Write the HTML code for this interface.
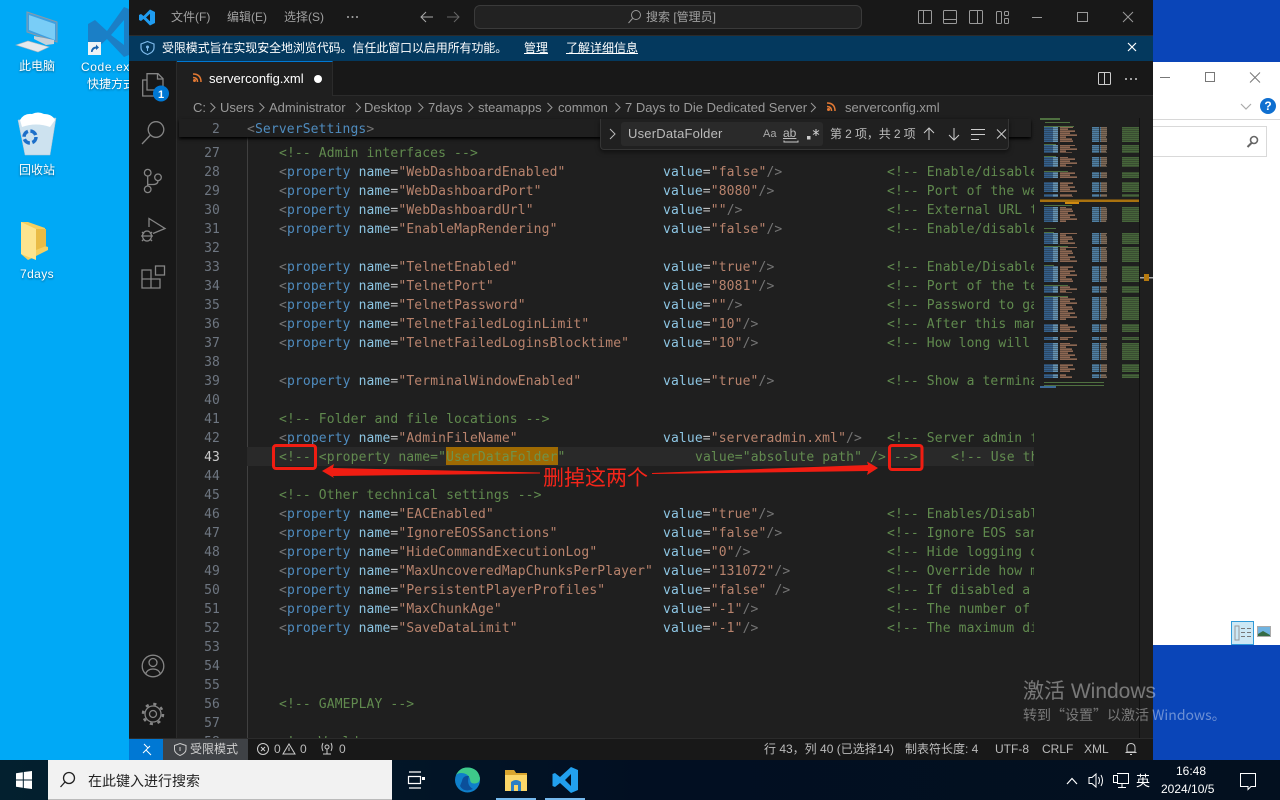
<!DOCTYPE html>
<html lang="zh-CN"><head><meta charset="utf-8"><title>serverconfig.xml</title>
<style>
*{box-sizing:border-box}
html,body{margin:0;padding:0;width:1280px;height:800px;overflow:hidden}
body{position:relative;background:linear-gradient(90deg,#00a9f6 0,#00a9f6 130px,#0a45b8 1153px);font-family:"Liberation Sans","Noto Sans CJK SC",sans-serif;font-size:12px;color:#ccc}
.a{position:absolute;white-space:nowrap;line-height:16px}
.dt{color:#fff;text-shadow:0 1px 2px rgba(0,0,0,.45);font-size:12px}
#win{position:absolute;left:129px;top:0;width:1024px;height:760px;background:#1f1f1f;overflow:hidden}
#code{position:absolute;left:179px;top:137px;width:855px;height:601px;overflow:hidden;font-family:"DejaVu Sans Mono","Liberation Mono",monospace;font-size:13px;letter-spacing:.13px}
.l{position:absolute;left:100px;height:19px;line-height:21px;white-space:pre;width:760px;opacity:.88}
.n{position:absolute;left:0;width:41px;text-align:right;height:19px;line-height:21px;color:#6e7681}
.l>b{font-weight:400;position:absolute;top:0}
.v{left:384px}.m{left:608px}
.p{color:#808080}.t{color:#569cd6}.k{color:#9cdcfe}.e{color:#d4d4d4}.s{color:#ce9178}.c{color:#6a9955}
.bc{position:absolute;top:100px;font-size:13px;line-height:16px;color:#9a9a9a;white-space:nowrap}
</style></head><body>

<!-- desktop -->
<svg class="a" style="left:0;top:0" width="130" height="300" viewBox="0 0 130 300">
<path d="M27 12L57 22V42L27 32Z" fill="#3f9fdf" stroke="#8a9aa8"/>
<path d="M29 15L55 24V40L29 30Z" fill="#79cdf7"/>
<path d="M34 36L54 40V44L46 45L34 39Z" fill="#c8d2da"/>
<path d="M16 45L28 41L49 47L38 52Z" fill="#e4e9ed" stroke="#a8b4bd" stroke-width=".6"/>
<path d="M18 120L56 118L50 155H25Z" fill="#d8e5ee" fill-opacity=".95" stroke="#b4c4d0" stroke-width=".5"/>
<path d="M20 120Q24 113 32 114Q38 111 44 114Q52 114 55 120L50 127Q36 122 22 127Z" fill="#fff"/>
<circle cx="30" cy="137" r="6" fill="none" stroke="#1d6fc9" stroke-width="3.500" stroke-dasharray="7 2.500"/>
<path d="M21 222H28L45 228V246L48 247V250L28 260L21 254Z" fill="#f5cf60"/>
<path d="M21 222L36 229V260L21 254Z" fill="#fde48e"/>
<path d="M36 229H46V246L36 250Z" fill="#e9bb46"/>
<path d="M124 7L129 9V55L124 57L107 39L95 50L88 46V24L95 20L107 31ZM124 20L111 35L124 45Z" fill="#1b7fc6" fill-rule="evenodd"/>
<rect x="88" y="42" width="13" height="13" fill="#eef3f6"/>
<path d="M91 52Q91 47 96 46.500V44.500L99 47.500L96 50V48.500Q93 49 92.500 52Z" fill="#1763b0"/>
</svg>
<div class="a dt" style="left:19px;top:58px">此电脑</div>
<div class="a dt" style="left:81px;top:59px;letter-spacing:.6px">Code.exe</div>
<div class="a dt" style="left:87px;top:76px">快捷方式</div>
<div class="a dt" style="left:19px;top:162px">回收站</div>
<div class="a dt" style="left:20px;top:266px;letter-spacing:.4px">7days</div>

<!-- white background window -->
<div class="a" style="left:1153px;top:62px;width:127px;height:583px;background:#fff"></div>
<div class="a" style="left:1153px;top:119px;width:127px;height:1px;background:#d8d8d8"></div>
<div class="a" style="left:1150px;top:126px;width:117px;height:31px;border:1px solid #d9d9d9;background:#fff"></div>
<div class="a" style="left:1231px;top:621px;width:23px;height:24px;background:#cce8f5;border:1px solid #2f9ad8"></div>
<svg class="a" style="left:1153px;top:62px" width="127" height="583" viewBox="1153 62 127 583" fill="none">
<path d="M1160 77.500H1170" stroke="#777"/>
<rect x="1205.500" y="72.500" width="9" height="9" stroke="#777"/>
<path d="M1250 72.500L1260 82.500M1260 72.500L1250 82.500" stroke="#777"/>
<path d="M1241 104L1246 109L1251 104" stroke="#aaa" stroke-width="1.200"/>
<circle cx="1268" cy="106" r="8" fill="#0f6fd0"/>
<circle cx="1254" cy="140" r="3.500" stroke="#666" stroke-width="1.600"/>
<path d="M1251.500 143L1247.500 147" stroke="#666" stroke-width="2"/>
<rect x="1235" y="626" width="4" height="14" stroke="#999"/>
<path d="M1241 628.500h4M1247 628.500h4M1241 632.500h4M1247 632.500h4M1241 636.500h4M1247 636.500h4" stroke="#777"/>
<rect x="1257.500" y="626.500" width="13" height="10" fill="#6fb3e0" stroke="#aaa"/>
<path d="M1258 634L1263 631L1270 635V636H1258Z" fill="#356b45"/>
</svg>
<div class="a" style="left:1263px;top:98px;width:10px;text-align:center;color:#fff;font-weight:700;font-size:12px">?</div>

<!-- VS Code window -->
<div id="win">
<div class="a" style="left:0;top:0;width:1024px;height:36px;background:#181818;border-bottom:1px solid #2b2b2b"></div>
<div class="a" style="left:345px;top:5px;width:388px;height:24px;background:#222;border:1px solid #3a3a3a;border-radius:6px"></div>
<div class="a" style="left:0;top:36px;width:1024px;height:25px;background:#04395e"></div>
<div class="a" style="left:0;top:61px;width:1024px;height:35px;background:#181818;border-bottom:1px solid #2b2b2b"></div>
<div class="a" style="left:48px;top:61px;width:156px;height:35px;background:#1f1f1f;border-top:1px solid #0078d4;border-right:1px solid #2b2b2b"></div>
<div class="a" style="left:0;top:61px;width:48px;height:678px;background:#181818;border-right:1px solid #2b2b2b"></div>
</div>

<div class="a" style="left:171px;top:9px;color:#a0a0a0">文件(F)</div>
<div class="a" style="left:227px;top:9px;color:#a0a0a0">编辑(E)</div>
<div class="a" style="left:284px;top:9px;color:#a0a0a0">选择(S)</div>
<div class="a" style="left:646px;top:9px;color:#a0a0a0">搜索 [管理员]</div>
<div class="a" style="left:162px;top:40px;color:#fff;letter-spacing:-.1px">受限模式旨在实现安全地浏览代码。信任此窗口以启用所有功能。</div>
<div class="a" style="left:524px;top:40px;color:#fff;text-decoration:underline">管理</div>
<div class="a" style="left:566px;top:40px;color:#fff;text-decoration:underline">了解详细信息</div>
<div class="a" style="left:209px;top:71px;color:#fff;font-size:13px">serverconfig.xml</div>

<div class="bc" style="left:193px">C:</div><div class="bc" style="left:220px">Users</div><div class="bc" style="left:269px">Administrator</div><div class="bc" style="left:364px">Desktop</div><div class="bc" style="left:428px">7days</div><div class="bc" style="left:478px">steamapps</div><div class="bc" style="left:558px">common</div><div class="bc" style="left:625px">7 Days to Die Dedicated Server</div><div class="bc" style="left:845px">serverconfig.xml</div>

<!-- editor -->
<div id="code">
<div class="a" style="left:68px;top:0;width:1px;height:601px;background:#404040"></div>
<div class="a" style="left:68px;top:310px;width:790px;height:19px;background:#292929"></div>
<div class="a" style="left:267px;top:310px;width:112px;height:18px;background:#9e6a03"></div>

<div class="n" style="top:6px">27</div><div class="l c" style="top:6px">&lt;!-- Admin interfaces --&gt;</div>
<div class="n" style="top:25px">28</div><div class="l" style="top:25px"><span class="p">&lt;</span><span class="t">property</span> <span class="k">name</span><span class="e">=</span><span class="s">"WebDashboardEnabled"</span><b class="v"><span class="k">value</span><span class="e">=</span><span class="s">"false"</span><span class="p">/&gt;</span></b><b class="m c">&lt;!-- Enable/disable the web dashboard</b></div>
<div class="n" style="top:44px">29</div><div class="l" style="top:44px"><span class="p">&lt;</span><span class="t">property</span> <span class="k">name</span><span class="e">=</span><span class="s">"WebDashboardPort"</span><b class="v"><span class="k">value</span><span class="e">=</span><span class="s">"8080"</span><span class="p">/&gt;</span></b><b class="m c">&lt;!-- Port of the web dashboard</b></div>
<div class="n" style="top:63px">30</div><div class="l" style="top:63px"><span class="p">&lt;</span><span class="t">property</span> <span class="k">name</span><span class="e">=</span><span class="s">"WebDashboardUrl"</span><b class="v"><span class="k">value</span><span class="e">=</span><span class="s">""</span><span class="p">/&gt;</span></b><b class="m c">&lt;!-- External URL to the web</b></div>
<div class="n" style="top:82px">31</div><div class="l" style="top:82px"><span class="p">&lt;</span><span class="t">property</span> <span class="k">name</span><span class="e">=</span><span class="s">"EnableMapRendering"</span><b class="v"><span class="k">value</span><span class="e">=</span><span class="s">"false"</span><span class="p">/&gt;</span></b><b class="m c">&lt;!-- Enable/disable rendering</b></div>
<div class="n" style="top:101px">32</div>
<div class="n" style="top:120px">33</div><div class="l" style="top:120px"><span class="p">&lt;</span><span class="t">property</span> <span class="k">name</span><span class="e">=</span><span class="s">"TelnetEnabled"</span><b class="v"><span class="k">value</span><span class="e">=</span><span class="s">"true"</span><span class="p">/&gt;</span></b><b class="m c">&lt;!-- Enable/Disable the telnet</b></div>
<div class="n" style="top:139px">34</div><div class="l" style="top:139px"><span class="p">&lt;</span><span class="t">property</span> <span class="k">name</span><span class="e">=</span><span class="s">"TelnetPort"</span><b class="v"><span class="k">value</span><span class="e">=</span><span class="s">"8081"</span><span class="p">/&gt;</span></b><b class="m c">&lt;!-- Port of the telnet server</b></div>
<div class="n" style="top:158px">35</div><div class="l" style="top:158px"><span class="p">&lt;</span><span class="t">property</span> <span class="k">name</span><span class="e">=</span><span class="s">"TelnetPassword"</span><b class="v"><span class="k">value</span><span class="e">=</span><span class="s">""</span><span class="p">/&gt;</span></b><b class="m c">&lt;!-- Password to gain access</b></div>
<div class="n" style="top:177px">36</div><div class="l" style="top:177px"><span class="p">&lt;</span><span class="t">property</span> <span class="k">name</span><span class="e">=</span><span class="s">"TelnetFailedLoginLimit"</span><b class="v"><span class="k">value</span><span class="e">=</span><span class="s">"10"</span><span class="p">/&gt;</span></b><b class="m c">&lt;!-- After this many wrong</b></div>
<div class="n" style="top:196px">37</div><div class="l" style="top:196px"><span class="p">&lt;</span><span class="t">property</span> <span class="k">name</span><span class="e">=</span><span class="s">"TelnetFailedLoginsBlocktime"</span><b class="v"><span class="k">value</span><span class="e">=</span><span class="s">"10"</span><span class="p">/&gt;</span></b><b class="m c">&lt;!-- How long will the</b></div>
<div class="n" style="top:215px">38</div>
<div class="n" style="top:234px">39</div><div class="l" style="top:234px"><span class="p">&lt;</span><span class="t">property</span> <span class="k">name</span><span class="e">=</span><span class="s">"TerminalWindowEnabled"</span><b class="v"><span class="k">value</span><span class="e">=</span><span class="s">"true"</span><span class="p">/&gt;</span></b><b class="m c">&lt;!-- Show a terminal window</b></div>
<div class="n" style="top:253px">40</div>
<div class="n" style="top:272px">41</div><div class="l c" style="top:272px">&lt;!-- Folder and file locations --&gt;</div>
<div class="n" style="top:291px">42</div><div class="l" style="top:291px"><span class="p">&lt;</span><span class="t">property</span> <span class="k">name</span><span class="e">=</span><span class="s">"AdminFileName"</span><b class="v"><span class="k">value</span><span class="e">=</span><span class="s">"serveradmin.xml"</span><span class="p">/&gt;</span></b><b class="m c">&lt;!-- Server admin file</b></div>
<div class="n" style="top:310px;color:#ccc">43</div><div class="l c" style="top:310px">&lt;!-- &lt;property name="UserDataFolder"<b style="left:416px">value="absolute path" /&gt; --&gt;</b><b style="left:672px">&lt;!-- Use this</b></div>
<div class="n" style="top:329px">44</div>
<div class="n" style="top:348px">45</div><div class="l c" style="top:348px">&lt;!-- Other technical settings --&gt;</div>
<div class="n" style="top:367px">46</div><div class="l" style="top:367px"><span class="p">&lt;</span><span class="t">property</span> <span class="k">name</span><span class="e">=</span><span class="s">"EACEnabled"</span><b class="v"><span class="k">value</span><span class="e">=</span><span class="s">"true"</span><span class="p">/&gt;</span></b><b class="m c">&lt;!-- Enables/Disables EasyAnti</b></div>
<div class="n" style="top:386px">47</div><div class="l" style="top:386px"><span class="p">&lt;</span><span class="t">property</span> <span class="k">name</span><span class="e">=</span><span class="s">"IgnoreEOSSanctions"</span><b class="v"><span class="k">value</span><span class="e">=</span><span class="s">"false"</span><span class="p">/&gt;</span></b><b class="m c">&lt;!-- Ignore EOS sanctions</b></div>
<div class="n" style="top:405px">48</div><div class="l" style="top:405px"><span class="p">&lt;</span><span class="t">property</span> <span class="k">name</span><span class="e">=</span><span class="s">"HideCommandExecutionLog"</span><b class="v"><span class="k">value</span><span class="e">=</span><span class="s">"0"</span><span class="p">/&gt;</span></b><b class="m c">&lt;!-- Hide logging of</b></div>
<div class="n" style="top:424px">49</div><div class="l" style="top:424px"><span class="p">&lt;</span><span class="t">property</span> <span class="k">name</span><span class="e">=</span><span class="s">"MaxUncoveredMapChunksPerPlayer"</span><b class="v" style="left:384px"><span class="k">value</span><span class="e">=</span><span class="s">"131072"</span><span class="p">/&gt;</span></b><b class="m c">&lt;!-- Override how many</b></div>
<div class="n" style="top:443px">50</div><div class="l" style="top:443px"><span class="p">&lt;</span><span class="t">property</span> <span class="k">name</span><span class="e">=</span><span class="s">"PersistentPlayerProfiles"</span><b class="v"><span class="k">value</span><span class="e">=</span><span class="s">"false"</span> <span class="p">/&gt;</span></b><b class="m c">&lt;!-- If disabled a</b></div>
<div class="n" style="top:462px">51</div><div class="l" style="top:462px"><span class="p">&lt;</span><span class="t">property</span> <span class="k">name</span><span class="e">=</span><span class="s">"MaxChunkAge"</span><b class="v"><span class="k">value</span><span class="e">=</span><span class="s">"-1"</span><span class="p">/&gt;</span></b><b class="m c">&lt;!-- The number of</b></div>
<div class="n" style="top:481px">52</div><div class="l" style="top:481px"><span class="p">&lt;</span><span class="t">property</span> <span class="k">name</span><span class="e">=</span><span class="s">"SaveDataLimit"</span><b class="v"><span class="k">value</span><span class="e">=</span><span class="s">"-1"</span><span class="p">/&gt;</span></b><b class="m c">&lt;!-- The maximum disk</b></div>
<div class="n" style="top:500px">53</div><div class="n" style="top:519px">54</div><div class="n" style="top:538px">55</div>
<div class="n" style="top:557px">56</div><div class="l c" style="top:557px">&lt;!-- GAMEPLAY --&gt;</div>
<div class="n" style="top:576px">57</div>
<div class="n" style="top:595px">58</div><div class="l c" style="top:595px">&lt;!-- World --&gt;</div>
</div>

<!-- sticky line -->
<div class="a" style="left:179px;top:119px;width:852px;height:18px;background:#1f1f1f;box-shadow:0 2px 3px #000;font:13px/18px 'DejaVu Sans Mono',monospace;letter-spacing:.13px">
<span class="a" style="left:0;top:2px;width:41px;text-align:right;line-height:18px;color:#6e7681">2</span><span class="a" style="left:68px;top:2px;line-height:18px;opacity:.88"><span class="p">&lt;</span><span class="t">ServerSettings</span><span class="p">&gt;</span></span></div>

<!-- minimap -->
<svg class="a" style="left:1034px;top:118px" width="119" height="282" viewBox="1034 118 119 282">
<defs><clipPath id="mm"><path d="M1040 127h100v15h-100zM1040 145h100v8h-100zM1040 157h100v10h-100zM1040 172h100v6h-100zM1040 182h100v10h-100zM1040 194h100v3h-100zM1040 207h100v15h-100zM1040 233h100v11h-100zM1040 247h100v15h-100zM1040 266h100v16h-100zM1040 286h100v7h-100zM1040 297h100v23h-100zM1040 324h100v8h-100zM1040 337h100v3h-100zM1040 343h100v17h-100zM1040 364h100v8h-100zM1040 374h100v4h-100z"/></clipPath>
<pattern id="st" width="4" height="2" patternUnits="userSpaceOnUse"><rect width="4" height="1" fill="#1f1f1f" fill-opacity=".35"/></pattern>
<pattern id="jg" width="20" height="14" patternUnits="userSpaceOnUse"><rect x="13" y="0" width="7" height="2" fill="#1f1f1f"/><rect x="8" y="2" width="12" height="2" fill="#1f1f1f"/><rect x="15" y="4" width="5" height="2" fill="#1f1f1f"/><rect x="10" y="6" width="10" height="2" fill="#1f1f1f"/><rect x="17" y="8" width="3" height="2" fill="#1f1f1f"/><rect x="6" y="10" width="14" height="2" fill="#1f1f1f"/><rect x="12" y="12" width="8" height="2" fill="#1f1f1f"/></pattern></defs>
<g clip-path="url(#mm)"><rect x="1044" y="120" width="9" height="260" fill="#34608c"/><rect x="1053" y="120" width="5" height="260" fill="#6594b3"/><rect x="1058" y="120" width="20" height="260" fill="#8c6752"/><rect x="1092" y="120" width="9" height="260" fill="#4f7fa3"/><rect x="1101" y="120" width="6" height="260" fill="#7e6a58"/><rect x="1122" y="120" width="17" height="260" fill="#46653a"/>
<rect x="1058" y="120" width="20" height="260" fill="url(#jg)"/><rect x="1099" y="120" width="20" height="260" fill="url(#jg)" opacity=".8"/></g>
<rect x="1034" y="118" width="105" height="282" fill="url(#st)"/>
<path d="M1040 118h20v2h-20zM1045 122h25v1h-25zM1044 126h30v1h-30zM1044 144h12v1h-12zM1044 156h12v1h-12zM1044 171h24v1h-24zM1044 205h28v1h-28zM1044 228h12v1h-12zM1044 232h10v1h-10zM1044 246h24v1h-24zM1044 265h10v1h-10zM1044 285h24v1h-24zM1044 296h24v1h-24z" fill="#4f7040"/>
<path d="M1044 382h60v1h-60zM1044 385h60v1h-60z" fill="#4f7040"/>
<rect x="1040" y="386" width="16" height="2" fill="#3d6a98"/>
<rect x="1040" y="199.500" width="99" height="2.500" fill="#a9720f"/>
<rect x="1065" y="202" width="14" height="2" fill="#d08a10"/>
<rect x="1139" y="118" width="14" height="282" fill="#1f1f1f"/>
<rect x="1139" y="118" width="1" height="282" fill="#111"/>
<rect x="1140" y="277" width="13" height="1.500" fill="#aaa"/>
<rect x="1144" y="274" width="5" height="7" fill="#b5790f"/>
</svg>
<div class="a" style="left:1139px;top:400px;width:1px;height:338px;background:#111"></div>

<!-- find widget -->
<div class="a" style="left:600px;top:119px;width:409px;height:31px;background:#202020;border:1px solid #353535;border-top:0;border-radius:0 0 4px 4px;box-shadow:0 2px 5px rgba(0,0,0,.5)"></div>
<div class="a" style="left:621px;top:122px;width:202px;height:24px;background:#2a2a2a;border-radius:3px"></div>
<div class="a" style="left:628px;top:126px;font-size:13px;color:#bbb;letter-spacing:.2px">UserDataFolder</div>
<div class="a" style="left:763px;top:126px;color:#aaa;font-size:11px">Aa</div>
<div class="a" style="left:783px;top:125px;color:#bbb;font-size:12px;text-decoration:underline">ab</div>
<div class="a" style="left:830px;top:126px;color:#bbb;font-size:12px;letter-spacing:-.1px">第 2 项，共 2 项</div>

<!-- status bar -->
<div class="a" style="left:129px;top:738px;width:1024px;height:22px;background:#181818;border-top:1px solid #2b2b2b"></div>
<div class="a" style="left:129px;top:739px;width:34px;height:21px;background:#0078d4"></div>
<div class="a" style="left:163px;top:739px;width:85px;height:21px;background:#3f4246"></div>
<div class="a" style="left:190px;top:741px;color:#d0d0d0">受限模式</div>
<div class="a" style="left:274px;top:741px;color:#bbb">0</div><div class="a" style="left:300px;top:741px;color:#bbb">0</div><div class="a" style="left:339px;top:741px;color:#bbb">0</div>
<div class="a" style="left:764px;top:741px;color:#bbb">行 43，列 40 (已选择14)</div>
<div class="a" style="left:905px;top:741px;color:#bbb">制表符长度: 4</div>
<div class="a" style="left:995px;top:741px;color:#bbb">UTF-8</div>
<div class="a" style="left:1042px;top:741px;color:#bbb">CRLF</div>
<div class="a" style="left:1084px;top:741px;color:#bbb">XML</div>

<!-- taskbar -->
<div class="a" style="left:0;top:760px;width:1280px;height:40px;background:linear-gradient(90deg,#03202f,#020f22 50%,#03101f)"></div>
<div class="a" style="left:48px;top:760px;width:344px;height:40px;background:#f2f2f2;border-bottom:1px solid #bbb"></div>
<div class="a" style="left:88px;top:772px;font-size:14px;line-height:18px;color:#222">在此键入进行搜索</div>
<div class="a" style="left:496px;top:798px;width:40px;height:2px;background:#76b9ed"></div>
<div class="a" style="left:545px;top:798px;width:40px;height:2px;background:#76b9ed"></div>
<div class="a" style="left:1136px;top:772px;font-size:14px;line-height:18px;color:#fff">英</div>
<div class="a" style="left:1176px;top:763px;color:#fff">16:48</div>
<div class="a" style="left:1161px;top:781px;color:#fff">2024/10/5</div>

<!-- icons overlay -->
<svg class="a" style="left:0;top:0" width="1280" height="800" viewBox="0 0 1280 800" fill="none">
<!-- vscode logo small -->
<path d="M150 9.500L155 12V23L150 25.500L143.500 19L141 21L139 20V15L141 14L143.500 16ZM150 13.800L146 17.500L150 21.200Z" fill="#1f9cf0" fill-rule="evenodd"/>
<circle cx="348" cy="17" r="1" fill="#aaa"/><circle cx="352.500" cy="17" r="1" fill="#aaa"/><circle cx="357" cy="17" r="1" fill="#aaa"/>
<path d="M433 17H421M426 12L421 17L426 22" stroke="#aaa"/>
<path d="M447 17H459M454 12L459 17L454 22" stroke="#666"/>
<circle cx="636" cy="15" r="4.500" stroke="#999"/><path d="M632.500 18.500L628.500 23" stroke="#999"/>
<!-- layout -->
<g stroke="#9a9a9a"><rect x="918.500" y="10.500" width="13" height="13" rx="1"/><path d="M923.500 11V23"/><rect x="943.500" y="10.500" width="13" height="13" rx="1"/><path d="M944 19.500H956"/><rect x="969.500" y="10.500" width="13" height="13" rx="1"/><path d="M977.500 11V23"/><rect x="996.500" y="11.500" width="5" height="12" rx="1"/><rect x="1004.500" y="11.500" width="4" height="4" rx="1"/><rect x="1004.500" y="18.500" width="4" height="5" rx="1"/>
<path d="M1032 17.500H1042"/><rect x="1077.500" y="12.500" width="10" height="9"/><path d="M1123 12L1133 22M1133 12L1123 22"/></g>
<!-- banner -->
<path d="M147.500 41.500L154 44V48Q154 52 147.500 54.500Q141 52 141 48V44Z" stroke="#7db9ea" stroke-width="1.200"/><circle cx="147.500" cy="47" r="1.500" fill="#7db9ea"/><path d="M147.500 47V51" stroke="#7db9ea"/>
<path d="M1128 43L1136 51M1136 43L1128 51" stroke="#fff" stroke-width="1.200"/>
<!-- tab -->
<g stroke="#e37933" stroke-width="1.500"><path d="M193 74Q201 74 201 82M193 77.500Q197.500 77.500 197.500 82"/></g><circle cx="194.500" cy="80.500" r="1.500" fill="#e37933"/>
<circle cx="318" cy="79" r="4" fill="#fff"/>
<rect x="1098.500" y="72.500" width="12" height="12" rx="1" stroke="#ccc"/><path d="M1104.500 73V84" stroke="#ccc"/>
<circle cx="1126" cy="79" r="1" fill="#ccc"/><circle cx="1131" cy="79" r="1" fill="#ccc"/><circle cx="1136" cy="79" r="1" fill="#ccc"/>
<!-- breadcrumb chevrons -->
<path d="M210.500 103L215 107.500L210.500 112M259.500 103L264 107.500L259.500 112M356 103L360.500 107.500L356 112M418.500 103L423 107.500L418.500 112M468.500 103L473 107.500L468.500 112M547.500 103L552 107.500L547.500 112M615.500 103L620 107.500L615.500 112M811 103L815.500 107.500L811 112" stroke="#999"/>
<g stroke="#e37933" stroke-width="1.500"><path d="M827 103Q835 103 835 111M827 106.500Q831.500 106.500 831.500 111"/></g><circle cx="828.500" cy="109.500" r="1.500" fill="#e37933"/>
<!-- find icons -->
<path d="M610 129L615 134L610 139" stroke="#bbb"/>
<path d="M784 140.500V142H798V140.500" stroke="#ccc"/>
<rect x="807" y="136" width="3.500" height="3.500" fill="#ccc"/><path d="M816 129V136M813 130.500L819 134.500M819 130.500L813 134.500" stroke="#ccc"/>
<path d="M929 140V128M924 133L929 128L934 133M954 128V140M949 135L954 140L959 135" stroke="#ccc"/>
<path d="M971 129.500H985M971 134.500H985M971 139.500H979" stroke="#ccc"/>
<path d="M997 129.500L1006 138.500M1006 129.500L997 138.500" stroke="#ccc"/>
<!-- activity bar -->
<g stroke="#858585" stroke-width="1.300">
<path d="M147 80H142.700V96H156V90"/><path d="M147 90V73.700H158L163 78.700V90Z"/><path d="M157.500 74V79H163"/>
<circle cx="156" cy="129.500" r="7.800"/><path d="M150.500 135L142 144"/>
<circle cx="147.700" cy="172.700" r="3.300"/><circle cx="147.700" cy="189.300" r="3.300"/><circle cx="158" cy="177.300" r="3.300"/><path d="M147.700 176V186M148 184.500H153Q158 184.500 158 180.600"/>
<path d="M149 227V218.500L165 228.500L153 233.500"/><ellipse cx="147" cy="236" rx="4.500" ry="5"/><path d="M142 232L144 234M152 232L150 234M141 236H143M153 236H151M142 241L144 239M152 241L150 239M143 236H151"/>
<path d="M142 270H151V288H142ZM151 279H160V288H151ZM142 279H151"/><rect x="155.500" y="266" width="9" height="9"/>
<circle cx="153" cy="666" r="10.800"/><circle cx="153" cy="662.500" r="4"/><path d="M145.500 674.500Q147 669 153 669Q159 669 160.500 674.500"/>
<circle cx="153" cy="714" r="3.500"/><circle cx="153" cy="714" r="8"/><circle cx="153" cy="714" r="10" stroke-width="2.500" stroke-dasharray="3.100 4.750"/>
</g>
<circle cx="161" cy="93.500" r="8" fill="#0078d4"/>
<text x="161" y="98" fill="#fff" font-size="11" font-family="Liberation Sans" text-anchor="middle" font-weight="700">1</text>
<!-- status icons -->
<path d="M144 744L148 748L143 753M150 746L146 750L151 755" stroke="#fff"/>
<path d="M180 743.500L186 745.500V749.500Q186 753 180 755.500Q174.500 753 174.500 749.500V745.500Z" stroke="#ccc"/><path d="M180 747V751" stroke="#ccc"/>
<circle cx="263" cy="749" r="5.500" stroke="#ccc"/><path d="M261 747L265 751M265 747L261 751" stroke="#ccc"/>
<path d="M289 744L295 754H283Z" stroke="#ccc"/><path d="M289 747.500V751" stroke="#ccc"/>
<circle cx="327" cy="747" r="2" stroke="#ccc"/><path d="M327 749V754M323 754H331M323 743Q321 747 323 751M331 743Q333 747 331 751" stroke="#ccc"/>
<path d="M1131 743.500Q1135 743.500 1135 748V752H1127V748Q1127 743.500 1131 743.500ZM1125.500 752.500H1136.500M1130 754.500H1132" stroke="#ccc"/>
<!-- annotations -->
<rect x="273.500" y="445.500" width="42" height="23" rx="2.500" stroke="#f01d12" stroke-width="3"/>
<rect x="889.500" y="445.500" width="32.500" height="24" rx="2.500" stroke="#f01d12" stroke-width="3"/>
<path d="M322 471L334 464L333 468L540 472.500V473.500L333 476L334 478Z" fill="#f01d12"/>
<path d="M652 473L868 465L867 461.500L878 468L867 475L868 471L652 474Z" fill="#f01d12"/>
<!-- taskbar icons -->
<path d="M16 773.200L22.800 772.200V779.500H16ZM23.800 772L32 771V779.500H23.800ZM16 780.500H22.800V787.800L16 786.800ZM23.800 780.500H32V789L23.800 788Z" fill="#fff"/>
<circle cx="69" cy="778" r="5.500" stroke="#222" stroke-width="1.300"/><path d="M65 782L60.500 787" stroke="#222" stroke-width="1.300"/>
<path d="M409 772H421M409 788H421M408.500 776.500H420.500V783.500H408.500Z" stroke="#fff" stroke-width="1.200"/><rect x="422" y="777" width="3" height="3" fill="#fff"/>
<circle cx="467.500" cy="780" r="12.500" fill="#0f7fc9"/>
<path d="M456 775Q460 767 468 767.500Q478 768 480 778Q480 783 475 783.500Q470 784 470 779Q468 773 461 773Q458 773 456 775Z" fill="#3ec98a"/>
<path d="M462 781Q463 775 469 776Q466 785 473 789Q464 793 460 786Z" fill="#0b4f9a"/>
<path d="M505 770H514L516 773H527V791H505Z" fill="#f5c343"/><rect x="505" y="775" width="22" height="16" fill="#fbd668"/><path d="M505 770H514L516 773H527V775H505Z" fill="#d9a52e"/><path d="M511 791V782Q516 778 521 782V791H518V785H514V791Z" fill="#2a7fc4"/>
<path d="M571 767L578 770V790L571 793L560 783L555 787L552.500 786V774L555 773L560 777ZM571 774L565 780L571 786Z" fill="#22a0ee" fill-rule="evenodd"/>
<path d="M1067 784L1072 778.500L1077 784" stroke="#fff" stroke-width="1.200"/>
<path d="M1089 777.500H1092L1096 774V787L1092 783.500H1089ZM1098.500 777Q1100.500 780.500 1098.500 784M1101 775Q1104 780.500 1101 786" stroke="#fff"/>
<rect x="1113.500" y="775.500" width="4" height="7" stroke="#fff"/><path d="M1117 773.500H1128.500V783.500H1117M1122 784V787M1118 787.500H1126" stroke="#fff"/>
<path d="M1240.500 773.500H1255.500V786.500H1251L1248 789.500V786.500H1240.500Z" stroke="#fff"/>
</svg>

<!-- annotation text + watermark -->
<div class="a" style="left:543px;top:464px;font-size:21px;line-height:26px;color:#f4251a;font-family:'Noto Sans CJK SC',sans-serif">删掉这两个</div>
<div class="a" style="left:1023px;top:680px;font-size:21px;line-height:24px;color:rgba(255,255,255,.4)">激活 Windows</div>
<div class="a" style="left:1023px;top:706px;font-size:14px;line-height:18px;color:rgba(255,255,255,.4);font-family:'Noto Sans CJK SC',sans-serif">转到“设置”以激活 Windows。</div>
</body></html>
